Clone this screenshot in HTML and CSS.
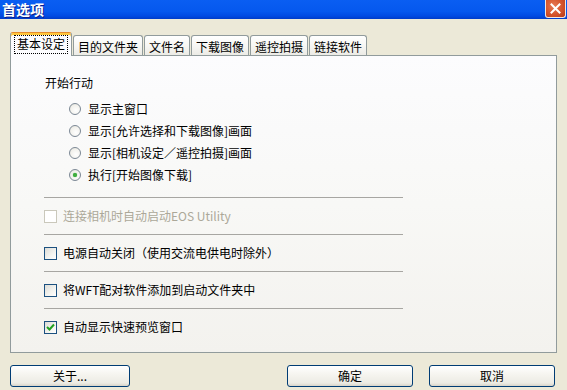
FILE: index.html
```html
<!DOCTYPE html>
<html lang="zh-CN">
<head>
<meta charset="utf-8">
<title>首选项</title>
<link rel="stylesheet" href="styles.css">
</head>
<body>
<div class="window">
  <div class="titlebar">
    <span class="title">首选项</span>
    <span class="close">
      <svg width="13" height="13" viewBox="0 0 13 13"><path d="M2.5 2.5 L10.5 10.5 M10.5 2.5 L2.5 10.5" stroke="#ffffff" stroke-width="2" stroke-linecap="square" fill="none"/></svg>
    </span>
  </div>
  <div class="content">
    <div class="tabs">
      <div class="tab active"><span class="focus">基本设定</span></div>
      <div class="tab">目的文件夹</div>
      <div class="tab">文件名</div>
      <div class="tab">下载图像</div>
      <div class="tab">遥控拍摄</div>
      <div class="tab">链接软件</div>
    </div>
    <div class="panel">
      <div class="group-label">开始行动</div>
      <div class="radios">
        <div class="radio-row"><span class="radio"></span><span>显示主窗口</span></div>
        <div class="radio-row"><span class="radio"></span><span>显示[允许选择和下载图像]画面</span></div>
        <div class="radio-row"><span class="radio"></span><span>显示[相机设定／遥控拍摄]画面</span></div>
        <div class="radio-row"><span class="radio checked"></span><span>执行[开始图像下载]</span></div>
      </div>
      <div class="sep first"></div>
      <div class="check-row disabled"><span class="checkbox"></span><span>连接相机时自动启动EOS Utility</span></div>
      <div class="sep"></div>
      <div class="check-row"><span class="checkbox"></span><span>电源自动关闭（使用交流电供电时除外）</span></div>
      <div class="sep"></div>
      <div class="check-row"><span class="checkbox"></span><span>将WFT配对软件添加到启动文件夹中</span></div>
      <div class="sep"></div>
      <div class="check-row"><span class="checkbox checked"><svg width="9" height="9" viewBox="0 0 9 9"><path d="M1 4 L3.5 6.5 L8 1.5" stroke="#21a121" stroke-width="2" fill="none"/></svg></span><span>自动显示快速预览窗口</span></div>
    </div>
    <div class="buttons">
      <button class="btn btn-about">关于...</button>
      <button class="btn btn-ok">确定</button>
      <button class="btn btn-cancel">取消</button>
    </div>
  </div>
</div>
</body>
</html>
```

FILE: styles.css
```css
html, body {
  margin: 0;
  padding: 0;
}
body {
  width: 567px;
  height: 390px;
  overflow: hidden;
  background: #ece9d8;
  font-family: "Noto Sans CJK SC", "Liberation Sans", sans-serif;
  font-size: 12px;
  color: #000;
}
.window {
  display: flex;
  flex-direction: column;
  height: 390px;
}
.titlebar {
  height: 19px;
  display: flex;
  justify-content: space-between;
  align-items: flex-start;
  background: linear-gradient(to bottom, #0a5ef2 0%, #0558ee 60%, #004ae2 85%, #003cc8 100%);
  padding-left: 2px;
}
.title {
  color: #fff;
  font-weight: bold;
  font-size: 14px;
  line-height: 18px;
  text-shadow: 1px 1px 0 #0a1e8a;
}
.close {
  width: 19px;
  height: 17px;
  margin-right: 1px;
  display: flex;
  align-items: center;
  justify-content: center;
  background: radial-gradient(circle at 40% 35%, #e77a55 0%, #d4532b 55%, #b8391a 100%);
  border: 1px solid #f0e8e4;
  border-top: none;
  border-radius: 0 0 3px 3px;
}
.content {
  padding: 13px 10px 0 10px;
  display: flex;
  flex-direction: column;
}
.tabs {
  display: flex;
  align-items: flex-end;
  gap: 1px;
  height: 23px;
  position: relative;
  z-index: 1;
}
.tab {
  box-sizing: border-box;
  height: 20px;
  padding: 3px 4px 0 4px;
  line-height: 16px;
  border: 1px solid #919b9c;
  border-bottom: none;
  border-radius: 3px 3px 0 0;
  background: linear-gradient(to bottom, #ffffff 0%, #f7f7f4 50%, #ecebe6 100%);
  white-space: nowrap;
}
.tab.active {
  height: 24px;
  margin-bottom: -1px;
  padding: 3px 4px 0 4px;
  background: #fcfcfe;
  border-top: 1px solid #e68b2c;
  box-shadow: inset 0 2px 0 #ffc73c;
}
.focus {
  display: inline-block;
  outline: 1px dotted #000;
  padding: 0 2px 1px 2px;
  line-height: 16px;
}
.panel {
  box-sizing: border-box;
  height: 298px;
  border: 1px solid #919b9c;
  background: linear-gradient(to bottom, #fcfcfe 0%, #f8f8f6 50%, #f3f2ee 100%);
  padding: 19px 0 0 33px;
  display: flex;
  flex-direction: column;
}
.group-label {
  line-height: 16px;
  margin-left: 1px;
}
.radios {
  margin-top: 7px;
  padding-left: 25px;
  display: flex;
  flex-direction: column;
}
.radio-row {
  height: 22px;
  display: flex;
  align-items: center;
  gap: 7px;
  line-height: 16px;
}
.radio {
  box-sizing: border-box;
  width: 12px;
  height: 12px;
  border-radius: 50%;
  border: 1px solid #7c8895;
  background: radial-gradient(circle at 60% 65%, #ffffff 0%, #f2f1ec 60%, #dcdad2 100%);
  display: flex;
  align-items: center;
  justify-content: center;
}
.radio.checked::after {
  content: "";
  width: 4px;
  height: 4px;
  border-radius: 50%;
  background: #3fae3f;
  box-shadow: 0 0 1px #21a121;
}
.sep {
  width: 359px;
  height: 0;
  border-top: 1px solid #a7a6a2;
}
.sep.first {
  margin-top: 11px;
}
.check-row {
  height: 36px;
  display: flex;
  align-items: center;
  gap: 6px;
  line-height: 16px;
}
.checkbox {
  box-sizing: border-box;
  width: 13px;
  height: 13px;
  border: 1px solid #1c5180;
  background: linear-gradient(135deg, #dcdcd7 0%, #f4f4f0 60%, #ffffff 100%);
  display: flex;
  align-items: center;
  justify-content: center;
}
.check-row.disabled {
  color: #aca899;
}
.check-row.disabled .checkbox {
  border-color: #cac8bb;
  background: #fff;
}
.buttons {
  display: flex;
  margin-top: 12px;
  padding-right: 2px;
}
.btn {
  box-sizing: border-box;
  height: 22px;
  border: 1px solid #003c74;
  border-radius: 3px;
  background: linear-gradient(to bottom, #ffffff 0%, #f6f5f0 40%, #ecebe4 85%, #d8d3c8 100%);
  font-family: "Noto Sans CJK SC", "Liberation Sans", sans-serif;
  font-size: 12px;
  line-height: 16px;
  color: #000;
  padding: 0;
}
.btn-about {
  width: 120px;
}
.btn-ok {
  width: 126px;
  margin-left: auto;
}
.btn-cancel {
  width: 126px;
  margin-left: 16px;
}
```
